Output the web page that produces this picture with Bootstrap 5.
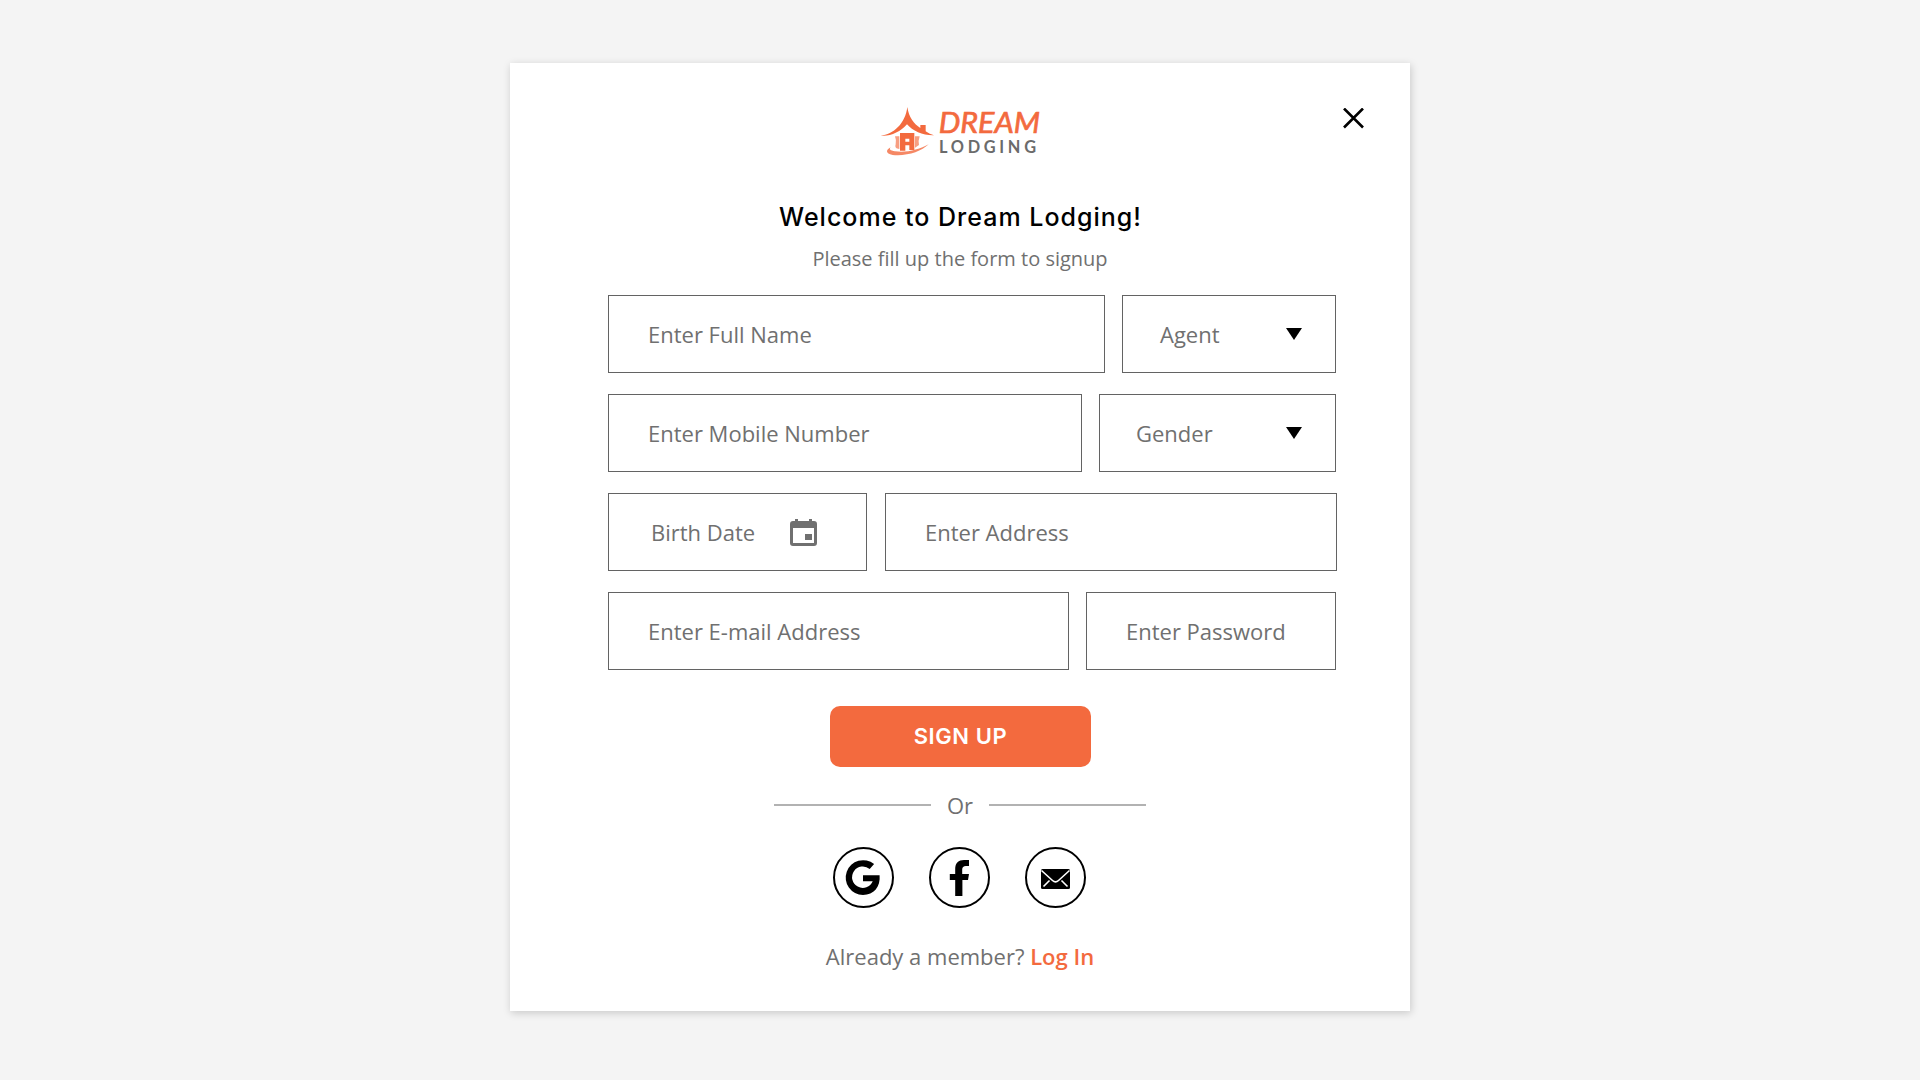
<!DOCTYPE html>
<html lang="en">
<head>
<meta charset="utf-8">
<meta name="viewport" content="width=device-width, initial-scale=1">
<title>Dream Lodging – Sign up</title>
<link href="https://cdn.jsdelivr.net/npm/bootstrap@5.3.0/dist/css/bootstrap.min.css" rel="stylesheet">
<style>
  body { background: #f4f4f4; min-height: 100vh; padding-top: 63px; font-family: "Open Sans", "Noto Sans", sans-serif; font-size: 22px; color: #707070; }
  .signup-card { width: 900px; height: 948px; padding-top: 32px; box-shadow: 1px 2px 8px rgba(0,0,0,.18); }
  .brand-logo { width: 180px; height: 70px; }
  .btn-dismiss { top: 45px; right: 46px; line-height: 0; }
  .welcome { font: 500 25px/32px Inter, sans-serif; color: #000; letter-spacing: 1px; margin: 36px 0 13px; padding-left: 1px; }
  .intro { font-size: 20px; line-height: 26px; margin-bottom: 23px; }
  .signup-form { margin-left: 98px; width: 729px; }
  .field-rows { gap: 21px; }
  .field-rows > div { gap: 17px; }
  .field-rows > .birth-row { gap: 18px; }
  .field { height: 78px; border: 1px solid #636363; border-radius: 0; background: #fff; color: #707070; font-size: 22px; line-height: 30px; padding: 0 0 0 39px; }
  .field::placeholder { color: #707070; opacity: 1; }
  .field:focus { border-color: #f36a3e; box-shadow: none; }
  .w-name { width: 497px; } .w-role { width: 214px; padding: 0 33px 0 37px; }
  .w-mobile { width: 474px; } .w-gender { width: 237px; padding: 0 33px 0 36px; }
  .w-birth { width: 259px; padding: 0 49px 0 42px; }
  .w-address { width: 452px; }
  .w-mail { width: 461px; } .w-pass { width: 250px; padding-left: 39px; }
  .btn-signup { width: 261px; height: 61px; margin: 36px 0 23px 222px; border: 0; border-radius: 10px; background: #f36a3e; color: #fff; font: 600 22px/30px Inter, sans-serif; letter-spacing: .6px; }
  .btn-signup span { display: block; margin-top: -2px; }
  .btn-signup:hover { background: #e25a2e; color: #fff; }
  .divider { width: 372px; height: 30px; line-height: 30px; margin-left: 264px; }
  .divider .rule { width: 157px; height: 2px; background: #b2b2b2; }
  .socials { gap: 35px; margin: 27px 0 33px 323px; }
  .socials a { width: 61px; height: 61px; line-height: 0; }
  .member { line-height: 30px; white-space: nowrap; }
  .member a { color: #f36a3e; font-weight: 600; }
</style>
<script src="https://cdn.jsdelivr.net/npm/bootstrap@5.3.0/dist/js/bootstrap.bundle.min.js" defer></script>
</head>
<body>
<main class="card signup-card position-relative border-0 rounded-0 mx-auto bg-white">
  <button type="button" class="btn btn-dismiss position-absolute p-0 border-0" aria-label="Close">
    <svg width="21" height="21" viewBox="0 0 21 21" fill="none" stroke="#000" stroke-width="2.6"><path d="M1 .5 20 19.5M20 .5 1 19.5"/></svg>
  </button>

  <svg class="brand-logo mx-auto flex-shrink-0" viewBox="0 0 540 210" role="img" aria-label="Dream Lodging">
    <g fill="#f36a3e">
      <path d="M32 122C70 118 106 86 112 36C116 66 132 87 151 99V90H167V109C175 115 184 119 192 121C159 122 128 108 111 88C91 111 61 125 32 122Z"/>
      <path d="M90 114H133V165H118V151H106V167H90ZM106 131V140H118V131Z" fill-rule="evenodd"/>
      <path d="M75 124H88V162C79 161 74 158 77 148Q80 137 75 124ZM135 124H149Q144 138 147 150L135 158Z" opacity=".65"/>
      <path d="M62 157C48 164 45 176 68 180C112 184 153 170 176 148C148 164 109 174 75 169C60 167 57 163 62 157Z" opacity=".8"/>
    </g>
    <text x="206" y="114" font-family="Lato, sans-serif" font-style="italic" font-weight="400" font-size="86" textLength="304" lengthAdjust="spacingAndGlyphs" fill="#f36a3e" stroke="#f36a3e" stroke-width="2">DREAM</text>
    <text x="207" y="173" font-family="Lato, sans-serif" font-weight="700" font-size="49" textLength="291" fill="#6b6b6b">LODGING</text>
  </svg>

  <h1 class="welcome text-center">Welcome to Dream Lodging!</h1>
  <p class="intro text-center">Please fill up the form to signup</p>

  <form class="signup-form">
    <div class="field-rows d-flex flex-column">
      <div class="d-flex">
        <input class="form-control field w-name" type="text" placeholder="Enter Full Name">
        <button type="button" class="btn field w-role d-flex align-items-center justify-content-between">Agent
          <svg width="16" height="12"><path d="M0 0H16L8 12Z"/></svg></button>
      </div>
      <div class="d-flex">
        <input class="form-control field w-mobile" type="tel" placeholder="Enter Mobile Number">
        <button type="button" class="btn field w-gender d-flex align-items-center justify-content-between">Gender
          <svg width="16" height="12"><path d="M0 0H16L8 12Z"/></svg></button>
      </div>
      <div class="birth-row d-flex">
        <button type="button" class="btn field w-birth d-flex align-items-center justify-content-between flex-shrink-0">Birth Date
          <svg width="27" height="27" viewBox="0 0 27 27"><path fill="#707070" fill-rule="evenodd" d="M5 0H8V2H19V0H22V2H24Q27 2 27 5V24Q27 27 24 27H3Q0 27 0 24V5Q0 2 3 2H5ZM3 9V24H24V9ZM15 15H22V21H15Z"/></svg></button>
        <input class="form-control field w-address flex-shrink-0" type="text" placeholder="Enter Address">
      </div>
      <div class="d-flex">
        <input class="form-control field w-mail" type="email" placeholder="Enter E-mail Address">
        <input class="form-control field w-pass" type="password" placeholder="Enter Password">
      </div>
    </div>
    <button type="submit" class="btn btn-signup d-block p-0"><span>SIGN UP</span></button>
  </form>

  <div class="divider d-flex align-items-center justify-content-between">
    <span class="rule"></span><span>Or</span><span class="rule"></span>
  </div>

  <div class="socials d-flex">
    <a href="#" aria-label="Google"><svg width="61" height="61" viewBox="0 0 61 61"><circle cx="30.5" cy="30.5" r="29.5" fill="#fff" stroke="#000" stroke-width="2"/><path transform="translate(-.5)" d="M41.6 17.1 37.2 22A10.7 10.7 0 1 0 40.2 34.2H30.5V28.3H47.1C48.2 39.7 41.3 48 30.5 48A17.4 17.4 0 1 1 41.6 17.1Z"/></svg></a>
    <a href="#" aria-label="Facebook"><svg width="61" height="61" viewBox="0 0 61 61"><circle cx="30.5" cy="30.5" r="29.5" fill="#fff" stroke="#000" stroke-width="2"/><path d="M26.2 49V33H20.8V27H26.2V22C26.2 16 29.5 13 35 13H40V19H37C34.5 19 33.2 20.2 33.2 22.5V27H40L39 33H33.4V49Z"/></svg></a>
    <a href="#" aria-label="Email"><svg width="61" height="61" viewBox="0 0 61 61"><circle cx="30.5" cy="30.5" r="29.5" fill="#fff" stroke="#000" stroke-width="2"/><rect x="16" y="22" width="29" height="20" rx="1.5"/><path d="M16.5 23.5 27.5 33.5Q30.5 36.3 33.5 33.5L44.5 23.5M18.5 39.5 24.5 33.5M42.5 39.5 36.5 33.5" fill="none" stroke="#fff" stroke-width="1.6"/></svg></a>
  </div>

  <p class="member text-center mb-0">Already a member? <a href="#" class="text-decoration-none">Log In</a></p>
</main>
</body>
</html>
